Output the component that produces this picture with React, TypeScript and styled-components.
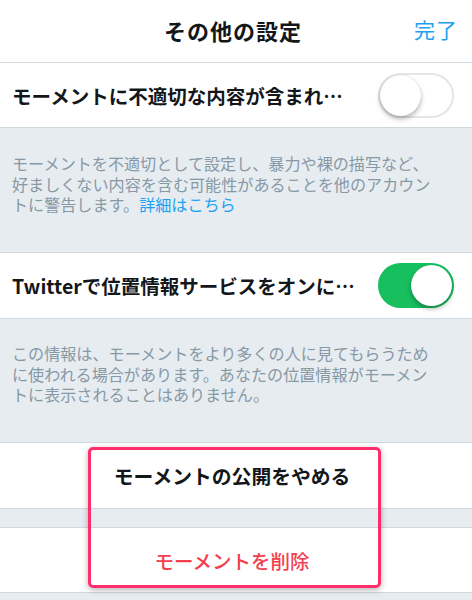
import React, { useState } from 'react'
import styled, { createGlobalStyle } from 'styled-components'

const GlobalStyle = createGlobalStyle`
  html, body {
    margin: 0;
    padding: 0;
    background: #e6ecf0;
  }
  body {
    font-family: "Noto Sans CJK JP", "Noto Sans", sans-serif;
    -webkit-font-smoothing: antialiased;
  }
`

const Page = styled.div`
  width: 472px;
  min-height: 600px;
  background: #e6ecf0;
  overflow: hidden;
`

const Header = styled.div`
  height: 62px;
  background: #fff;
  border-bottom: 1px solid #cfd9de;
  display: flex;
  align-items: center;
  justify-content: center;
  position: relative;
`

const Title = styled.div`
  font-size: 22px;
  font-weight: 700;
  color: #14171a;
  letter-spacing: 1px;
  margin-top: -2px;
  margin-left: -6px;
`

const Done = styled.button`
  position: absolute;
  right: 14px;
  top: 14px;
  border: 0;
  background: none;
  padding: 0;
  font-family: inherit;
  font-size: 21px;
  color: #1da1f2;
  letter-spacing: 1px;
`

const Row = styled.div<{ $bordered?: boolean; $h?: number }>`
  height: ${({ $h }) => $h || 65}px;
  background: #fff;
  display: flex;
  align-items: center;
  justify-content: space-between;
  padding: 0 18px 0 12px;
  border-top: ${({ $bordered }) => ($bordered ? '1px solid #cfd9de' : '0')};
  border-bottom: 1px solid #cfd9de;
  box-sizing: border-box;
`

const RowLabel = styled.div`
  font-size: 19.5px;
  font-weight: 700;
  color: #14171a;
  white-space: nowrap;
`

const Track = styled.div<{ $on: boolean }>`
  width: 76px;
  height: 45px;
  border-radius: 23px;
  box-sizing: border-box;
  background: ${({ $on }) => ($on ? '#17bf5f' : '#fff')};
  border: 2px solid ${({ $on }) => ($on ? '#17bf5f' : '#e6e6e6')};
  display: flex;
  align-items: center;
  justify-content: ${({ $on }) => ($on ? 'flex-end' : 'flex-start')};
  cursor: pointer;
`

const Knob = styled.div`
  width: 41px;
  height: 41px;
  border-radius: 50%;
  background: #fff;
  box-shadow: 0 3px 5px rgba(0, 0, 0, 0.28), 0 0 1px rgba(0, 0, 0, 0.2);
`

const Note = styled.div<{ $top: number; $h: number }>`
  height: ${({ $h }) => $h}px;
  box-sizing: border-box;
  padding: ${({ $top }) => $top}px 12px 0;
  font-size: 16.1px;
  line-height: 20.5px;
  color: #8899a6;
  white-space: nowrap;
`

const Link = styled.span`
  color: #1da1f2;
`

const Actions = styled.div`
  position: relative;
`

const ActionRow = styled(Row)`
  justify-content: center;
  padding: 0;
`

const ActionText = styled.div<{ $danger?: boolean }>`
  font-size: ${({ $danger }) => ($danger ? 19.5 : 19.8)}px;
  font-weight: ${({ $danger }) => ($danger ? 500 : 700)};
  color: ${({ $danger }) => ($danger ? '#f4404e' : '#14171a')};
  margin-left: -8px;
`

const Spacer = styled.div`
  height: 18px;
`

const Highlight = styled.div`
  position: absolute;
  left: 88px;
  top: 5px;
  width: 293px;
  height: 141px;
  box-sizing: border-box;
  border: 3px solid #ff2d6b;
  border-radius: 5px;
  box-shadow: 0 2px 6px rgba(0, 0, 0, 0.3);
  pointer-events: none;
`

const Toggle = ({ initial }: { initial: boolean }) => {
  const [on, setOn] = useState(initial)
  return (
    <Track $on={on} onClick={() => setOn(!on)}>
      <Knob />
    </Track>
  )
}

const App = () => {
  return (
    <Page>
      <GlobalStyle />
      <Header>
        <Title>その他の設定</Title>
        <Done>完了</Done>
      </Header>

      <Row>
        <RowLabel>モーメントに不適切な内容が含まれ…</RowLabel>
        <Toggle initial={false} />
      </Row>
      <Note $top={25} $h={124}>
        モーメントを不適切として設定し、暴力や裸の描写など、
        <br />
        好ましくない内容を含む可能性があることを他のアカウン
        <br />
        トに警告します。<Link>詳細はこちら</Link>
      </Note>

      <Row $bordered $h={67}>
        <RowLabel>Twitterで位置情報サービスをオンに…</RowLabel>
        <Toggle initial={true} />
      </Row>
      <Note $top={24} $h={123}>
        この情報は、モーメントをより多くの人に見てもらうため
        <br />
        に使われる場合があります。あなたの位置情報がモーメン
        <br />
        トに表示されることはありません。
      </Note>

      <Actions>
        <ActionRow $bordered $h={67}>
          <ActionText>モーメントの公開をやめる</ActionText>
        </ActionRow>
        <Spacer />
        <ActionRow $bordered $h={66}>
          <ActionText $danger>モーメントを削除</ActionText>
        </ActionRow>
        <Highlight />
      </Actions>
    </Page>
  )
}

export default App
